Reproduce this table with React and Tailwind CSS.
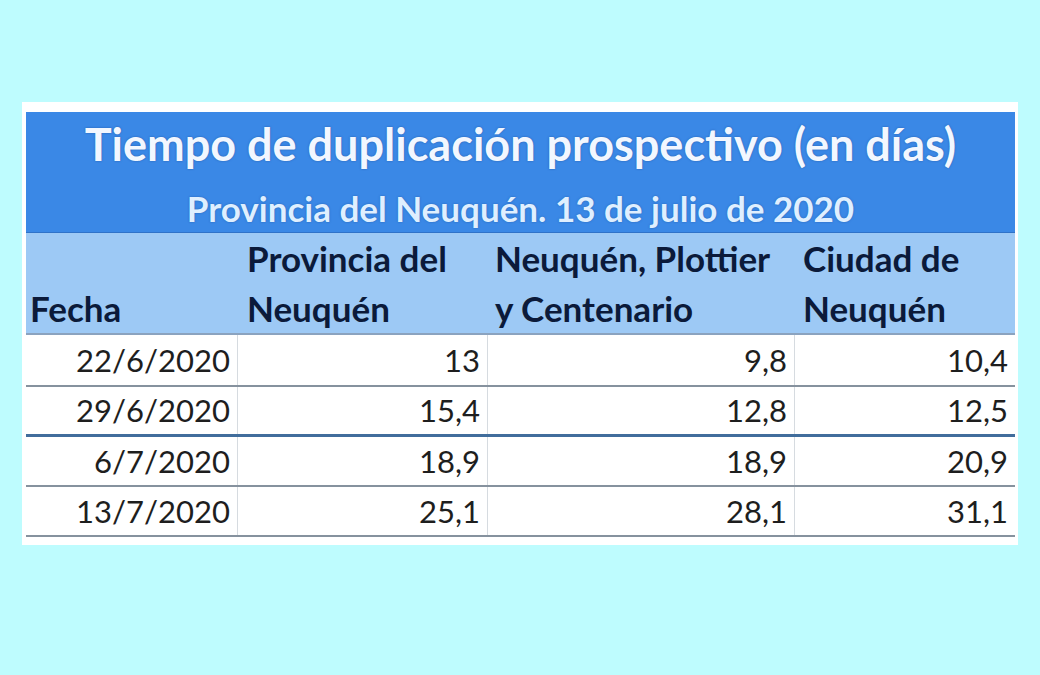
import React from "react";

const rows = [
  ["22/6/2020", "13", "9,8", "10,4"],
  ["29/6/2020", "15,4", "12,8", "12,5"],
  ["6/7/2020", "18,9", "18,9", "20,9"],
  ["13/7/2020", "25,1", "28,1", "31,1"],
];

export default function App() {
  return (
    <div
      className="w-[1040px] h-[675px] bg-[#befcfe] pt-[102px] pl-[22px]"
      style={{ fontFamily: "Lato, 'Open Sans', sans-serif" }}
    >
      <div className="w-[996px] bg-white pt-[10px] pl-[4px] pr-[3px] pb-[8px]">
        <div className="bg-[#3a88e6] h-[121px] border-b border-[#2f72c8] flex flex-col items-center">
          <div className="text-[45px] font-bold text-[#f2f7ff] leading-none mt-[10px] [text-shadow:0_0_2px_rgba(20,60,130,0.6)]">
            Tiempo de duplicación prospectivo (en días)
          </div>
          <div className="text-[35px] font-bold text-[#dfefff] leading-none mt-[24px] [text-shadow:0_0_2px_rgba(20,60,130,0.5)]">
            Provincia del Neuquén. 13 de julio de 2020
          </div>
        </div>
        <div className="grid grid-cols-[212px_250px_307px_220px] bg-[#9dc9f5] h-[102px] border-b-2 border-[#8ba3bf] text-[#0b1a3a] font-bold text-[35px] leading-[50px]">
          <div className="pl-[4px] flex items-end">Fecha</div>
          <div className="pl-[9px] flex flex-col justify-end">
            <span>Provincia del</span>
            <span>Neuquén</span>
          </div>
          <div className="pl-[7px] flex flex-col justify-end">
            <span>Neuquén, Plottier</span>
            <span>y Centenario</span>
          </div>
          <div className="pl-[8px] flex flex-col justify-end">
            <span>Ciudad de</span>
            <span>Neuquén</span>
          </div>
        </div>
        {rows.map((r, i) => (
          <div
            key={i}
            className={
              "grid grid-cols-[212px_250px_307px_220px] text-[#1e1e1e] text-[31px] " +
              (i === 0 ? "h-[52px] " : "h-[50px] ") +
              (i === 1
                ? "border-b-[3px] border-[#416d9c]"
                : "border-b-2 border-[#86929e]")
            }
          >
            {r.map((c, j) => (
              <div
                key={j}
                className={
                  "flex items-center justify-end pr-[7px] " +
                  (j < 3 ? "border-r border-[#d6dbe0]" : "")
                }
              >
                {c}
              </div>
            ))}
          </div>
        ))}
      </div>
    </div>
  );
}
